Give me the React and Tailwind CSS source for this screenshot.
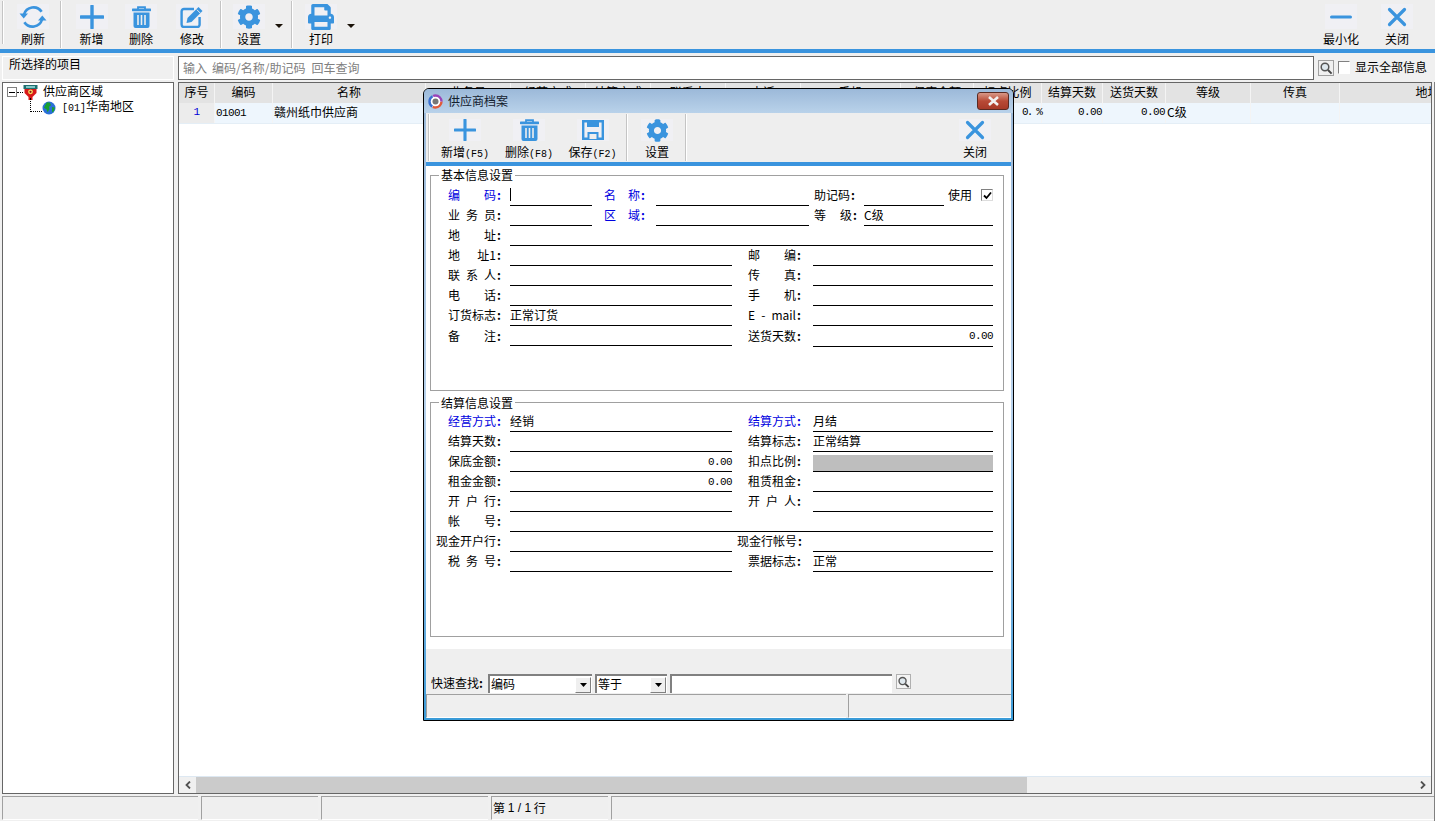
import React from "react";
import { FaCog, FaPrint } from "react-icons/fa";

const BLUE = "#3a94de";
const MONO = "font-['Liberation_Mono'] text-[11px] tracking-[-0.6px]";

const IconPlus = ({ s = 24 }) => (
  <svg width={s} height={s} viewBox="0 0 24 24"><path d="M12 1v22M1 12h22" stroke={BLUE} strokeWidth="3.4" strokeLinecap="round" fill="none" /></svg>
);
const IconX = ({ s = 20 }) => (
  <svg width={s} height={s} viewBox="0 0 20 20"><path d="M2.5 2.5l15 15M17.5 2.5l-15 15" stroke={BLUE} strokeWidth="3.2" strokeLinecap="round" fill="none" /></svg>
);
const IconMinus = () => (
  <svg width="22" height="20" viewBox="0 0 22 20"><path d="M1.5 10h19" stroke={BLUE} strokeWidth="3" strokeLinecap="round" /></svg>
);
const IconTrash = ({ w = 19, h = 22 }) => (
  <svg width={w} height={h} viewBox="0 0 19 22">
    <path d="M6 3V1.2h7V3" stroke={BLUE} strokeWidth="1.8" fill="none" />
    <rect x="0" y="2.6" width="19" height="2.6" rx="0.6" fill={BLUE} />
    <path d="M1.5 6.6h16V20a2 2 0 0 1-2 2h-12a2 2 0 0 1-2-2z" fill={BLUE} />
    <rect x="5.2" y="9" width="1.6" height="10" fill="#eeeeee" />
    <rect x="8.7" y="9" width="1.6" height="10" fill="#eeeeee" />
    <rect x="12.2" y="9" width="1.6" height="10" fill="#eeeeee" />
  </svg>
);
const IconEdit = () => (
  <svg width="24" height="22" viewBox="0 0 24 22">
    <path d="M14 3H4a2.4 2.4 0 0 0-2.4 2.4v13.2A2.4 2.4 0 0 0 4 21h13.2a2.4 2.4 0 0 0 2.4-2.4V11" stroke={BLUE} strokeWidth="2.4" fill="none" />
    <path d="M18.5 1l4 4L11.5 16l-5 1 1-5z" fill={BLUE} />
    <path d="M16.8 3.6l3.4 3.4" stroke="#eeeeee" strokeWidth="1" />
  </svg>
);
const IconRefresh = () => (
  <svg width="28" height="26" viewBox="0 0 28 26">
    <path d="M5 10.500A9.800 9.800 0 0 1 22.600 7.800" stroke={BLUE} strokeWidth="2.7" fill="none" />
    <path d="M23 15.500A9.800 9.800 0 0 1 5.400 18.200" stroke={BLUE} strokeWidth="2.7" fill="none" />
    <path d="M0.500 9.500h8.500L4.700 14.600z" fill={BLUE} />
    <path d="M27.500 16.500H19l4.300-5.100z" fill={BLUE} />
  </svg>
);
const IconSave = () => (
  <svg width="22" height="20" viewBox="0 0 22 20">
    <path d="M1.200 1.200h19.600v17.600H1.200z" stroke={BLUE} strokeWidth="2.4" fill="none" />
    <path d="M5 1.500h12v5.500H5z" fill={BLUE} />
    <path d="M5.500 12h11v7h-11z" fill={BLUE} />
    <path d="M7.500 14h7v5h-7z" fill="#eeeeee" />
  </svg>
);
const Caret = () => (
  <svg width="8" height="4" viewBox="0 0 8 4"><path d="M0 0h8L4 4z" fill="#1a1208" /></svg>
);
const Magnifier = () => (
  <svg width="14" height="14" viewBox="0 0 14 14">
    <circle cx="6" cy="6" r="3.800" stroke="#555" strokeWidth="1.500" fill="#dfe8ee" />
    <path d="M9 9l3.600 3.600" stroke="#444" strokeWidth="2" />
  </svg>
);
const AppLogo = () => (
  <svg width="15" height="15" viewBox="0 0 15 15">
    <circle cx="7.500" cy="7.500" r="6" fill="#fff" stroke="#e05a3a" strokeWidth="2.400" strokeDasharray="12 26" />
    <circle cx="7.500" cy="7.500" r="6" fill="none" stroke="#3a6fd0" strokeWidth="2.400" strokeDasharray="12 26" strokeDashoffset="-12.500" />
    <circle cx="7.500" cy="7.500" r="6" fill="none" stroke="#9a44b8" strokeWidth="2.400" strokeDasharray="12 26" strokeDashoffset="-25" />
    <circle cx="7.500" cy="7.500" r="3" fill="#777" />
  </svg>
);
const TreeRoot = () => (
  <svg width="15" height="15" viewBox="0 0 15 15">
    <rect x="0.500" y="0" width="14" height="4" fill="#1f6f6f" />
    <rect x="3" y="1.200" width="9" height="1.600" fill="#9adada" />
    <path d="M1.500 4h12v4L9.500 12v3h-4v-3L1.500 8z" fill="#d81818" />
    <circle cx="7.500" cy="6.800" r="2.400" fill="#f4e060" />
    <circle cx="7.500" cy="6.800" r="1.100" fill="#8a1010" />
  </svg>
);
const Globe = () => (
  <svg width="14" height="14" viewBox="0 0 14 14">
    <circle cx="7" cy="7" r="6.500" fill="#2a6fd8" />
    <path d="M5 1.200l3 .5 1 2.500-2 1.500.5 2.500-2 3-1-3-2.500-1.500L3 4.500z" fill="#18a030" />
    <path d="M10 6l2.800.5-.8 3.500-2 1.500z" fill="#18a030" />
  </svg>
);

const Sep = ({ className = "" }) => <div className={`w-[2px] self-stretch bg-[#c4c4c4] border-r border-white ${className}`} />;

function ToolBtn({ icon, label, width = "w-[50px]", className = "", iconH = "h-[25px]", labelMt = "mt-[3px]" }) {
  return (
    <div className={`flex flex-col items-center ${width} shrink-0 ${className}`}>
      <div className={`${iconH} w-[32px] flex items-center justify-center bg-[#f0f0f4]`}>{icon}</div>
      <div className={`text-[12px] leading-[14px] ${labelMt} whitespace-nowrap text-black`}>{label}</div>
    </div>
  );
}

const columns = [
  ["序号", 36], ["编码", 58], ["名称", 153], ["业务员", 85], ["经营方式", 75], ["结算方式", 65], ["联系人", 75],
  ["电话", 75], ["手机", 100], ["保底金额", 73], ["扣点比例", 68], ["结算天数", 61], ["送货天数", 63], ["等级", 85], ["传真", 89], ["地址", 176],
];

const rowCells = {
  0: <span className={`block text-center text-[#0000d8] ${MONO}`}>1</span>,
  1: <span className={`pl-[1px] ${MONO}`}>01001</span>,
  2: <span className="pl-[1px]">赣州纸巾供应商</span>,
  10: <span className="block text-right font-['Liberation_Mono'] text-[11px] tracking-[-1.85px]">0. %</span>,
  11: <span className={`block text-right ${MONO}`}>0.00</span>,
  12: <span className={`block text-right ${MONO}`}>0.00</span>,
  13: <span className="pl-[1px]">C级</span>,
};

function Label({ text, blue, width = "w-[54px]", className = "ml-[17px]", low }) {
  const parts = text.split(" ");
  return (
    <div className={`${width} ${className} ${low ? "" : "pb-[2px]"} shrink-0 flex justify-between items-center text-[12px] leading-[14px] whitespace-nowrap ${blue ? "text-[#0000e0]" : "text-black"}`}>
      {parts.map((p, i) => (
        <span key={i} className="flex items-center">
          {p}
          {i === parts.length - 1 && <span className="w-[6px] text-center font-bold">:</span>}
        </span>
      ))}
    </div>
  );
}

function Field({ value, width, right, gray, className = "" }) {
  return (
    <div className={`${width} ${className} shrink-0 border-b border-black flex items-center text-[12px] leading-[14px] ${right ? "justify-end" : "pb-[2px]"} ${gray ? "bg-[#bebebe] mt-[3px]" : ""}`}>
      {right ? <span className={MONO}>{value}</span> : value}
    </div>
  );
}

function Row({ children }) {
  return <div className="flex h-[20px] items-stretch">{children}</div>;
}

function Pair({ l1, v1, r1, l2, v2, r2, gray, blue, wide, mb }) {
  return (
    <Row>
      <Label text={l1} blue={blue} low={mb} width={wide ? "w-[66px]" : "w-[54px]"} className={wide ? "ml-[5px]" : "ml-[17px]"} />
      <Field value={v1} right={r1} width="w-[222px]" className="ml-[8px]" />
      <Label text={l2} blue={blue} low={mb} width={wide ? "w-[66px]" : "w-[54px]"} className={wide ? "ml-[5px]" : "ml-[16px]"} />
      <Field value={v2} right={r2} gray={gray} width="w-[180px]" className={wide ? "ml-[10px]" : `ml-[11px] ${mb ? "mb-[-1px]" : ""}`} />
    </Row>
  );
}

function Group({ title, heightClass, top, legendTop = "top-[-8px]", children }) {
  return (
    <div className={`relative ml-[4px] w-[574px] border border-[#a0a0a0] ${heightClass} ${top}`}>
      <div className={`absolute left-[8px] ${legendTop} bg-white px-[2px] text-[12px] leading-[14px] text-black`}>{title}</div>
      {children}
    </div>
  );
}

function Combo({ value, width }) {
  return (
    <div className={`${width} h-[19px] shrink-0 border-l-2 border-t-2 border-[#808080] bg-white flex items-center justify-between text-[12px] leading-[14px] pl-[1px] pr-[1px]`}>
      <span className="pb-[2px]">{value}</span>
      <div className="w-[16px] h-[16px] bg-[#efefef] border border-[#808080] border-l-white border-t-white flex items-center justify-center">
        <svg width="7" height="4" viewBox="0 0 7 4"><path d="M0 0h7L3.500 4z" fill="#000" /></svg>
      </div>
    </div>
  );
}

function Dialog() {
  return (
    <div className="absolute left-[423px] top-[88px] w-[591px] h-[633px] border border-black rounded-t-[6px] bg-gradient-to-b from-[#9ab8d8] via-[#b8d2ec] to-[#3a9bd8] flex flex-col overflow-hidden">
      <div className="h-[24px] shrink-0 bg-gradient-to-b from-[#9cb9d9] to-[#b9d2ea] flex items-center pl-[4px] pr-[4px]">
        <AppLogo />
        <span className="ml-[5px] text-[12px] leading-[14px] text-[#14202e]">供应商档案</span>
        <div className="ml-auto w-[32px] h-[18px] rounded-[3px] border border-[#5a2a22] bg-gradient-to-b from-[#d89888] via-[#b84a36] to-[#a83a28] flex items-center justify-center">
          <svg width="13" height="10" viewBox="0 0 13 10"><path d="M2 1l9 8M11 1l-9 8" stroke="#f2f2f2" strokeWidth="2.600" /></svg>
        </div>
      </div>
      <div className="flex-1 flex flex-col mx-[2px] mb-[2px] bg-[#efefef] min-h-0">
        <div className="h-[49px] shrink-0 bg-[#eeeeee] flex items-stretch pl-[2px]">
          <Sep className="my-[1px]" />
          <ToolBtn width="w-[64px]" className="ml-[3px] pt-[6px]" iconH="h-[22px]" labelMt="mt-[4px]" icon={<IconPlus s={22} />} label={<>新增<span className="font-['Liberation_Mono'] text-[10px]">(F5)</span></>} />
          <ToolBtn width="w-[64px]" className="pt-[6px]" iconH="h-[22px]" labelMt="mt-[4px]" icon={<IconTrash w={19} h={22} />} label={<>删除<span className="font-['Liberation_Mono'] text-[10px]">(F8)</span></>} />
          <ToolBtn width="w-[63px]" className="pt-[6px]" iconH="h-[22px]" labelMt="mt-[4px]" icon={<IconSave />} label={<>保存<span className="font-['Liberation_Mono'] text-[10px]">(F2)</span></>} />
          <Sep className="my-[1px] ml-[2px]" />
          <ToolBtn width="w-[56px]" className="ml-[1px] pt-[6px]" iconH="h-[22px]" labelMt="mt-[4px]" icon={<FaCog size={23} color={BLUE} />} label="设置" />
          <Sep className="my-[1px]" />
          <ToolBtn width="w-[50px]" className="ml-auto mr-[11px] pt-[6px]" iconH="h-[22px]" labelMt="mt-[4px]" icon={<IconX s={20} />} label="关闭" />
        </div>
        <div className="h-[4px] shrink-0 bg-[#3a94de]" />
        <div className="h-[483px] shrink-0 bg-white flex flex-col">
          <Group title="基本信息设置" heightClass="h-[216px]" top="mt-[9px]">
            <div className="pt-[10px] flex flex-col">
              <Row>
                <Label text="编 码" blue />
                <Field width="w-[82px]" className="ml-[8px]" value={<span className="w-px h-[13px] bg-black" />} />
                <Label text="名 称" blue width="w-[42px]" className="ml-[12px]" />
                <Field width="w-[153px]" className="ml-[10px]" />
                <Label text="助记码" width="w-[44px]" className="ml-[5px]" />
                <Field width="w-[80px]" className="ml-[6px]" />
                <span className="ml-[4px] text-[12px] leading-[18px]">使用</span>
                <div className="ml-[9px] mt-[3px] w-[12px] h-[12px] border border-[#808080] border-r-[#ddd] border-b-[#ddd] bg-white flex items-center justify-center">
                  <svg width="9" height="9" viewBox="0 0 9 9"><path d="M1 4.500l2.500 2.500L8 1.500" stroke="#000" strokeWidth="1.800" fill="none" /></svg>
                </div>
              </Row>
              <Row>
                <Label text="业 务 员" />
                <Field width="w-[82px]" className="ml-[8px]" />
                <Label text="区 域" blue width="w-[42px]" className="ml-[12px]" />
                <Field width="w-[153px]" className="ml-[10px]" />
                <Label text="等 级" width="w-[44px]" className="ml-[5px]" />
                <Field width="w-[129px]" className="ml-[6px]" value="C级" />
              </Row>
              <Row>
                <Label text="地 址" />
                <Field width="w-[483px]" className="ml-[8px]" />
              </Row>
              <Pair l1="地 址1" l2="邮 编" />
              <Pair l1="联 系 人" l2="传 真" />
              <Pair l1="电 话" l2="手 机" />
              <Pair l1="订货标志" v1="正常订货" l2="E - mail" />
              <Pair l1="备 注" l2="送货天数" v2="0.00" r2 mb />
            </div>
          </Group>
          <Group title="结算信息设置" heightClass="h-[235px]" top="mt-[11px]" legendTop="top-[-7px]">
            <div className="pt-[9px] flex flex-col">
              <Pair l1="经营方式" v1="经销" l2="结算方式" v2="月结" blue />
              <Pair l1="结算天数" l2="结算标志" v2="正常结算" />
              <Pair l1="保底金额" v1="0.00" r1 l2="扣点比例" gray />
              <Pair l1="租金金额" v1="0.00" r1 l2="租赁租金" />
              <Pair l1="开 户 行" l2="开 户 人" />
              <Row>
                <Label text="帐 号" />
                <Field width="w-[483px]" className="ml-[8px]" />
              </Row>
              <Pair l1="现金开户行" l2="现金行帐号" wide />
              <Pair l1="税 务 号" l2="票据标志" v2="正常" />
            </div>
          </Group>
        </div>
        <div className="flex-1 min-h-0 flex items-end pl-[5px] pb-[1px]">
          <div className="flex items-center gap-[3px] h-[19px]">
            <span className="text-[12px] leading-[14px] w-[54px] mb-[2px] whitespace-nowrap">快速查找<span className="font-bold">:</span></span>
            <Combo value="编码" width="w-[104px]" />
            <Combo value="等于" width="w-[72px]" />
            <div className="w-[222px] h-[19px] border-l-2 border-t-2 border-[#808080] bg-white" />
            <div className="ml-[1px] w-[15px] h-[15px] mb-[4px] border border-[#b0b0b0] flex items-center justify-center bg-[#f4f4f4]"><Magnifier /></div>
          </div>
        </div>
        <div className="h-[24px] shrink-0 flex gap-[2px]">
          <div className="w-[420px] border-t border-l border-[#a0a0a0] bg-[#efefef] border-b border-b-white" />
          <div className="flex-1 border-t border-l border-[#a0a0a0] bg-[#efefef] border-b border-b-white" />
        </div>
      </div>
    </div>
  );
}

export default function App() {
  return (
    <div className="relative w-[1437px] h-[821px] overflow-hidden bg-white font-['Noto_Sans_CJK_SC',sans-serif] text-black text-[12px]">
      <div className="w-[1435px] h-full bg-[#f0f0f0] flex flex-col">
        <div className="h-[49px] shrink-0 bg-[#eeeeee] flex items-stretch pt-[1px] pb-[1px] pl-[2px]">
          <Sep className="mb-[4px]" />
          <ToolBtn icon={<IconRefresh />} label="刷新" className="ml-[4px] pt-[3px]" />
          <Sep className="ml-[2px]" />
          <ToolBtn icon={<IconPlus />} label="新增" width="w-[49px]" className="ml-[5px] pt-[3px]" />
          <ToolBtn icon={<IconTrash />} label="删除" className="pt-[3px]" />
          <ToolBtn icon={<IconEdit />} label="修改" className="ml-[1px] pt-[3px]" />
          <Sep className="ml-[3px]" />
          <ToolBtn icon={<FaCog size={24} color={BLUE} />} label="设置" className="ml-[2px] pt-[3px]" />
          <div className="ml-[1px] w-[8px] pt-[23px]"><Caret /></div>
          <Sep className="ml-[8px]" />
          <ToolBtn icon={<FaPrint size={26} color={BLUE} />} label="打印" className="ml-[3px] pt-[3px]" />
          <div className="ml-[1px] w-[8px] pt-[23px]"><Caret /></div>
          <ToolBtn icon={<IconMinus />} label="最小化" className="ml-auto pt-[3px]" />
          <ToolBtn icon={<IconX />} label="关闭" className="ml-[6px] mr-[13px] pt-[3px]" />
        </div>
        <div className="h-[4px] shrink-0 bg-[#3a94de]" />
        <div className="h-[29px] shrink-0 flex pt-[3px] pb-[2px] pl-[2px] items-stretch">
          <div className="w-[172px] shrink-0 border border-white pl-[6px] text-[12px] leading-[14px]">所选择的项目</div>
          <div className="ml-[4px] w-[1136px] shrink-0 border border-[#666] bg-white flex items-center pl-[4px] text-[#808080] text-[12px] leading-[14px] whitespace-pre">
            <span>输入</span>
            <span className="ml-[5px]">编码/名称/助记码</span>
            <span className="ml-[6px]">回车查询</span>
          </div>
          <div className="ml-[4px] mt-[4px] w-[16px] h-[16px] border border-[#a0a0a0] bg-[#f0f0f0] flex items-center justify-center"><Magnifier /></div>
          <div className="ml-[4px] mt-[5px] w-[12px] h-[13px] border border-[#808080] border-r-white border-b-white bg-white" />
          <span className="ml-[5px] mt-[4px] text-[12px] leading-[14px] whitespace-nowrap">显示全部信息</span>
        </div>
        <div className="flex-1 min-h-0 flex flex-col border-r border-[#808080] w-[1435px]">
          <div className="h-[712px] shrink-0 flex pl-[2px]">
            <div className="w-[172px] shrink-0 border border-[#666] bg-white pl-[4px] pt-[1px]">
              <div className="flex items-center h-[16px]">
                <div className="w-[10px] h-[10px] border border-[#808080] bg-white flex items-center justify-center"><div className="w-[6px] h-px bg-black" /></div>
                <div className="w-[6px] border-t border-dotted border-black" />
                <TreeRoot />
                <span className="ml-[5px] text-[12px] leading-[14px] mb-[2px]">供应商区域</span>
              </div>
              <div className="flex items-center h-[16px] ml-[23px]">
                <div className="w-[12px] h-[14px] mb-[7px] border-l border-b border-dotted border-black" />
                <Globe />
                <span className="ml-[6px] text-[12px] leading-[14px] whitespace-nowrap mb-[2px]"><span className="font-['Liberation_Mono'] text-[10px]">[01]</span>华南地区</span>
              </div>
            </div>
            <div className="ml-[4px] w-[1254px] shrink-0 border border-[#666] bg-white flex flex-col overflow-hidden">
              <div className="h-[20px] shrink-0 flex bg-[#e3e3e3] overflow-hidden">
                {columns.map(([t, w], i) => (
                  <div key={i} className="shrink-0 border-r border-[#f4f4f4] flex items-center justify-center pb-[2px] text-[12px] leading-[14px] whitespace-nowrap" style={{ width: w }}>{t}</div>
                ))}
              </div>
              <div className="h-[21px] shrink-0 flex bg-[#eef6fd] overflow-hidden border-b border-[#e4eef6]">
                {columns.map(([t, w], i) => (
                  <div key={i} className={`shrink-0 border-r border-[#f4f4f4] flex items-center pb-[2px] text-[12px] leading-[14px] whitespace-nowrap ${i === 0 ? "bg-[#ececec]" : ""}`} style={{ width: w }}>
                    <div className="w-full">{rowCells[i]}</div>
                  </div>
                ))}
              </div>
              <div className="flex-1 min-h-0 bg-white border-b border-[#dde8f2]" />
              <div className="h-[16px] shrink-0 bg-[#f0f0f0] flex items-stretch">
                <div className="w-[17px] shrink-0 flex items-center justify-center">
                  <svg width="6" height="8" viewBox="0 0 6 8"><path d="M5 .5L1.500 4 5 7.500" stroke="#505050" strokeWidth="1.800" fill="none" /></svg>
                </div>
                <div className="w-[831px] shrink-0 bg-[#cbcbcb]" />
                <div className="ml-auto w-[16px] shrink-0 flex items-center justify-center">
                  <svg width="6" height="8" viewBox="0 0 6 8"><path d="M1 .5L4.500 4 1 7.500" stroke="#505050" strokeWidth="1.800" fill="none" /></svg>
                </div>
              </div>
            </div>
          </div>
          <div className="mt-[2px] h-[24px] shrink-0 flex gap-[3px] pl-[2px]">
            <div className="w-[196px] border-t border-l border-[#a0a0a0] bg-[#efefef] border-b border-b-white" />
            <div className="w-[117px] border-t border-l border-[#a0a0a0] bg-[#efefef] border-b border-b-white" />
            <div className="w-[167px] border-t border-l border-[#a0a0a0] bg-[#efefef] border-b border-b-white" />
            <div className="w-[117px] border-t border-l border-[#a0a0a0] bg-[#efefef] border-b border-b-white flex items-center pl-[1px] text-[12px] leading-[14px] whitespace-pre">第 <span className="font-['Liberation_Sans']">1 / 1</span> 行</div>
            <div className="flex-1 border-t border-l border-[#a0a0a0] bg-[#efefef] border-b border-b-white" />
          </div>
        </div>
      </div>
      <Dialog />
    </div>
  );
}
